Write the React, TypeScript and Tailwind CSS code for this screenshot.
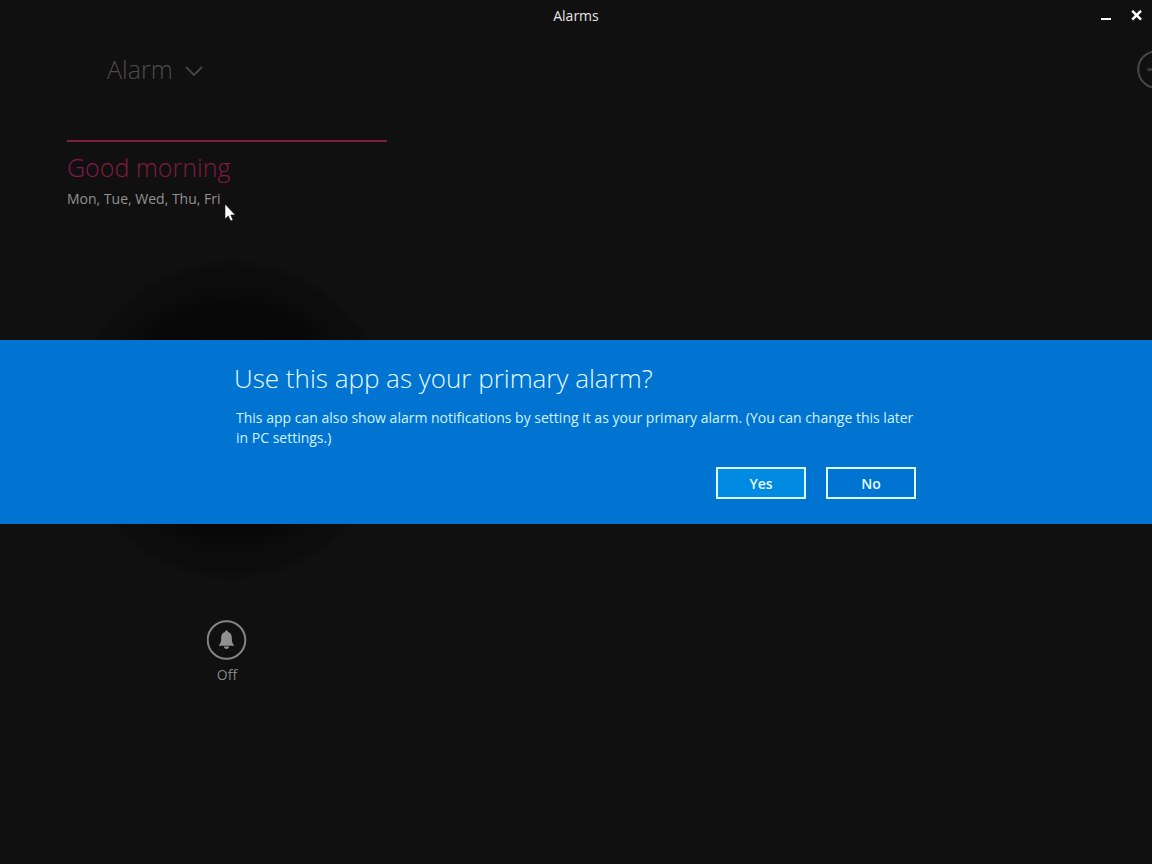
import React from "react";

function TitleBar() {
  return (
    <header className="grid h-8 grid-cols-[1fr_auto_1fr] items-center text-[#e6e6e6]">
      <span />
      <h1 className="text-sm leading-5">Alarms</h1>
      <div className="flex justify-end">
        <button type="button" aria-label="Minimize" className="flex h-8 w-7 items-center justify-center">
          <svg viewBox="0 0 12 12" className="size-3" aria-hidden="true">
            <rect x="1" y="8" width="10" height="2" fill="#fff" />
          </svg>
        </button>
        <button type="button" aria-label="Close" className="flex h-8 w-8 items-center justify-center">
          <svg viewBox="0 0 12 12" className="size-3" aria-hidden="true">
            <path d="M2.200 0.800L11 9.600M11 0.800L2.200 9.600" stroke="#fff" strokeWidth="2.5" />
          </svg>
        </button>
      </div>
    </header>
  );
}

function AppBar() {
  return (
    <div className="flex h-10 items-center justify-between overflow-hidden pl-[107px]">
      <button type="button" className="flex items-center gap-3 text-[25px] leading-9 font-light text-[#4c4c4c]">
        Alarm
        <svg viewBox="0 0 18 12" className="mt-1 h-3 w-[18px]" fill="none" aria-hidden="true">
          <path d="M1 2L9 10L17 2" stroke="#484848" strokeWidth="1.8" />
        </svg>
      </button>
      <button type="button" aria-label="Add alarm" className="-mr-6">
        <svg viewBox="0 0 39 39" className="size-[39px]" fill="none" aria-hidden="true">
          <circle cx="19.5" cy="19.5" r="18.3" stroke="#474747" strokeWidth="2" />
          <path d="M10.500 19.500H28.500M19.500 10.500V28.500" stroke="#3c3c3c" strokeWidth="3" />
        </svg>
      </button>
    </div>
  );
}

function AlarmCard() {
  return (
    <section className="ml-[67px] mt-[51px] w-80 border-t-2 border-[#7f1f42]">
      <h2 className="mt-[7px] text-[25px] leading-9 font-light text-[#841b42]">Good morning</h2>
      <p className="mt-1 text-sm leading-5 text-[#929292]">Mon, Tue, Wed, Thu, Fri</p>
      <svg viewBox="0 0 320 320" className="mt-[51px] size-80" aria-hidden="true">
        <defs>
          <radialGradient id="dial">
            <stop offset="0" stopColor="#060606" />
            <stop offset="0.72" stopColor="#080808" />
            <stop offset="0.8" stopColor="#0b0b0b" />
            <stop offset="0.94" stopColor="#0c0c0c" />
            <stop offset="1" stopColor="#0f0f0f" />
          </radialGradient>
        </defs>
        <circle cx="164" cy="160" r="160" fill="url(#dial)" />
      </svg>
      <button type="button" className="mx-auto mt-10 flex flex-col items-center gap-[5px] text-sm leading-5 text-[#858585]">
        <svg viewBox="0 0 40 40" className="size-10" aria-hidden="true">
          <circle cx="19.5" cy="20" r="18.800" fill="none" stroke="#858585" strokeWidth="2" />
          <path
            d="M19.500 10.500C20.500 10.500 21 11.200 21 12C23.700 12.800 24.800 14.800 24.800 17.800C24.800 22 25.500 23.500 27.500 25.800H11.500C13.500 23.500 14.200 22 14.200 17.800C14.200 14.800 15.300 12.800 18 12C18 11.200 18.500 10.500 19.500 10.500Z"
            fill="#909090"
          />
          <path d="M16.800 26.600H22.200C22 28.200 21 29 19.500 29S17 28.200 16.800 26.600Z" fill="#909090" />
        </svg>
        Off
      </button>
    </section>
  );
}

function PrimaryAlarmDialog() {
  return (
    <div className="fixed inset-0 flex items-center">
      <div
        role="dialog"
        aria-modal="true"
        aria-labelledby="dialog-title"
        aria-describedby="dialog-text"
        className="w-full bg-[#0074d0] pt-5 pb-[25px]"
      >
        <div className="mx-auto max-w-[684px]">
          <h2 id="dialog-title" className="text-[26px] leading-9 text-[#e4fbff] font-light">
            Use this app as your primary alarm?
          </h2>
          <p id="dialog-text" className="mt-3 px-0.5 text-sm leading-5 text-[#d2f3ff]">
            This app can also show alarm notifications by setting it as your primary alarm. (You can change this later in PC settings.)
          </p>
          <div className="mt-[19px] flex justify-end gap-5 px-0.5">
            <button type="button" className="h-8 w-[90px] border-2 border-[#d9fcff] bg-[#008ae2] pt-0.5 text-sm leading-5 font-semibold text-[#e4fbff]">
              Yes
            </button>
            <button type="button" className="h-8 w-[90px] border-2 border-[#d9fcff] pt-0.5 text-sm leading-5 font-semibold text-[#e4fbff]">
              No
            </button>
          </div>
        </div>
      </div>
    </div>
  );
}

function Pointer() {
  return (
    <svg viewBox="0 0 12 19" className="pointer-events-none absolute left-[224px] top-[203px] h-[19px] w-3" aria-hidden="true">
      <path d="M1 1V16L4.300 12.900L6.600 18L9 17L6.800 12H11.300Z" fill="#fff" stroke="#111" strokeWidth="0.6" />
    </svg>
  );
}

export default function App() {
  return (
    <div className="relative min-h-screen overflow-hidden bg-[#101010] font-['Open_Sans','Noto_Sans',sans-serif]">
      <TitleBar />
      <main className="pt-[17px]">
        <AppBar />
        <AlarmCard />
      </main>
      <PrimaryAlarmDialog />
      <Pointer />
    </div>
  );
}
